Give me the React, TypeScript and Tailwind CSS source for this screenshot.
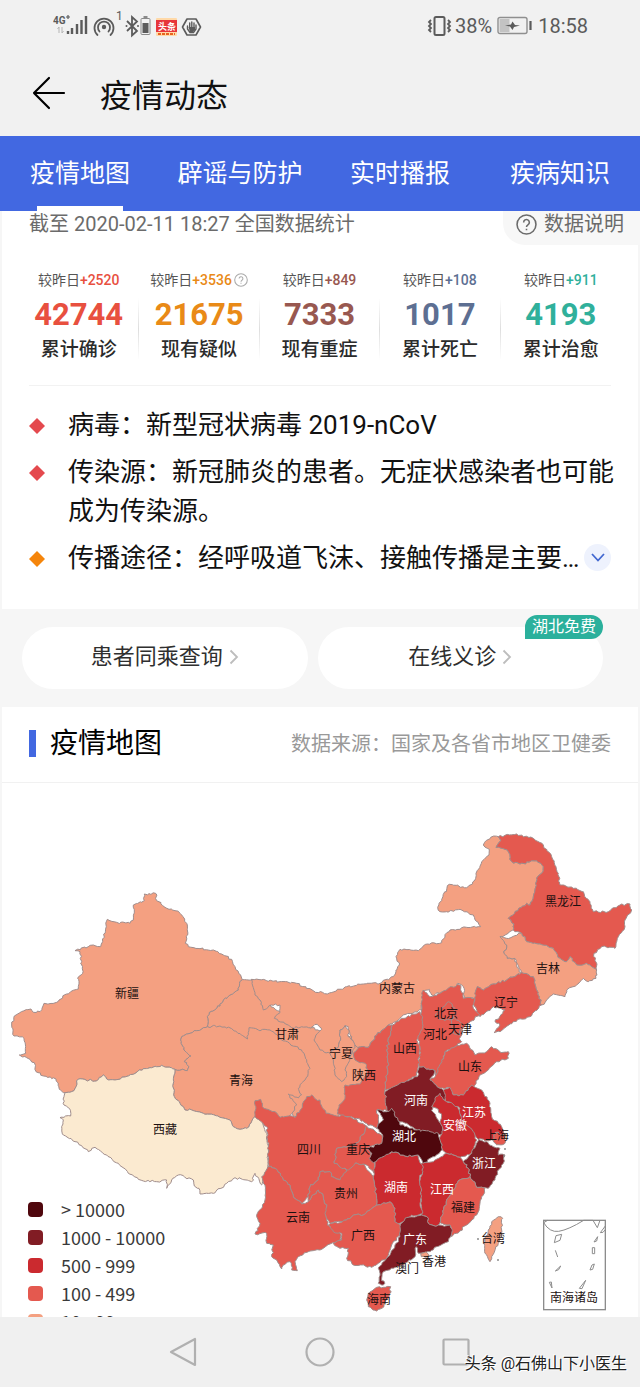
import { useState } from 'react';
import clsx from 'clsx';

const NONE = '#fbead0';
const LOW = '#f4a081';
const MID = '#e4594f';
const HIGH = '#cb2a2f';
const SEVERE = '#811c24';
const WORST = '#4f070d';

interface Region {
  id: string;
  fill: string;
  at: [number, number];
  points: string;
}

// outlines are stored at 3x, each one relative to its own map sheet
const WEST: [number, number] = [0, 291];
const NORTH: [number, number] = [690, 531];
const NORTHEAST: [number, number] = [1110, 111];
const SOUTHWEST: [number, number] = [720, 891];
const EAST: [number, number] = [1200, 591];
const SOUTHEAST: [number, number] = [1140, 951];

const regions: Region[] = [
  { id: 'gansu', fill: LOW, at: [0, 0], points: '727,590 755,589 780,651 900,720 1000,760 1060,760 1100,800 1120,880 1060,960 1010,1005 970,1010 880,1000 800,900 700,800 622,731 622,701 628,688 650,676 670,651 690,636 715,621 719,596' },
  { id: 'xinjiang', fill: LOW, at: WEST, points: '433,42 467,40 470,62 495,82 525,92 545,105 560,130 563,165 556,190 565,200 600,206 640,210 670,225 695,238 705,260 727,299 719,305 715,330 690,345 670,360 650,385 628,397 622,410 622,440 590,452 545,470 542,480 552,510 573,528 553,545 567,560 562,572 525,568 485,556 450,563 418,570 400,583 345,600 320,597 310,585 290,603 235,598 222,632 195,638 178,628 168,597 130,588 108,575 103,548 80,533 58,525 77,520 72,475 42,468 35,435 43,408 70,393 93,387 100,397 120,395 132,370 170,367 200,342 235,327 237,305 233,295 248,280 240,215 225,212 280,195 302,200 308,185 322,118 350,127 390,130 400,120 400,75 433,62' },
  { id: 'qinghai', fill: LOW, at: [0, 0], points: '622,731 660,729 695,737 743,768 747,734 775,741 810,741 840,766 905,801 930,856 915,891 895,916 905,935 895,945 865,933 870,945 890,966 870,998 850,1006 800,1010 765,1001 740,1036 720,1039 700,1031 690,1011 660,1003 610,991 575,981 555,981 540,961 523,941 520,891 525,859 562,863 567,851 553,836 573,819 552,801 542,771 545,761 590,743' },
  { id: 'tibet', fill: NONE, at: WEST, points: '195,638 222,632 235,598 290,603 310,585 320,597 345,600 400,583 418,570 450,563 485,556 525,568 520,600 523,650 540,670 555,690 575,690 610,700 660,712 690,720 700,740 720,748 740,745 765,710 785,720 800,760 805,810 803,860 785,915 765,880 755,905 705,893 680,910 640,940 600,942 597,925 583,918 580,900 535,885 515,900 500,925 500,900 470,905 430,903 412,893 385,880 355,850 320,825 285,802 265,815 245,797 225,785 190,765 185,740 190,720 180,713 212,708 208,685 192,675 192,650' },
  { id: 'inner-mongolia', fill: LOW, at: [0, 0], points: '755,589 800,593 840,596 890,601 940,623 982,633 1040,611 1090,603 1140,601 1180,581 1198,546 1188,521 1200,499 1255,503 1282,483 1325,479 1335,455 1350,441 1400,433 1442,431 1420,396 1380,379 1340,386 1320,386 1313,373 1348,304 1400,314 1425,291 1428,271 1445,236 1467,216 1468,199 1450,186 1472,163 1495,161 1502,173 1488,193 1522,201 1535,236 1560,243 1610,233 1630,251 1625,271 1610,286 1600,341 1590,366 1580,361 1525,406 1542,423 1540,441 1505,461 1520,486 1512,511 1522,526 1545,526 1557,566 1565,569 1520,591 1480,603 1450,621 1432,611 1430,646 1395,646 1390,611 1372,601 1358,621 1320,631 1295,636 1288,619 1270,626 1265,681 1210,696 1195,711 1165,726 1130,756 1105,793 1075,793 1065,786 1050,756 1045,731 1035,728 1020,741 1022,771 1015,793 990,811 960,801 942,771 948,756 965,739 952,724 925,734 875,734 823,706 840,689 840,666 815,666 790,681 780,651 765,636' },
  { id: 'ningxia', fill: LOW, at: NORTH, points: '345,197 357,210 355,230 365,240 375,262 360,295 345,330 350,350 335,365 315,345 310,300 300,280 325,262 332,240 330,210' },
  { id: 'heilongjiang', fill: MID, at: NORTHEAST, points: '385,50 440,42 490,55 520,75 545,110 565,160 570,195 610,205 640,215 660,250 670,275 715,275 750,255 780,252 785,270 765,300 765,320 745,350 735,385 695,380 672,400 680,450 650,430 620,435 600,410 590,425 570,415 550,385 510,372 470,365 455,340 430,330 432,312 415,295 470,250 480,255 490,230 500,175 515,160 520,140 500,122 450,132 425,125 412,90 378,82 392,62' },
  { id: 'jilin', fill: LOW, at: NORTHEAST, points: '390,350 410,355 455,340 470,365 510,372 550,385 570,415 590,425 600,410 620,435 650,430 680,450 678,475 655,485 640,475 620,495 590,510 585,530 550,522 515,555 500,510 490,470 455,458 435,415 412,415 402,400 410,375' },
  { id: 'liaoning', fill: MID, at: NORTHEAST, points: '455,458 490,470 500,510 515,555 480,590 430,605 390,635 372,638 390,615 375,605 405,570 370,560 330,590 310,550 322,500 340,510 370,492 410,480' },
  { id: 'shaanxi', fill: MID, at: NORTH, points: '475,195 440,225 415,262 385,262 370,285 375,300 410,315 410,345 390,372 345,375 345,415 327,435 322,462 345,470 380,475 410,490 440,505 445,480 440,450 480,450 465,390 475,310 470,270 487,195' },
  { id: 'hebei', fill: MID, at: EAST, points: '65,40 70,30 90,50 120,40 155,20 180,15 190,55 225,55 220,85 240,105 205,130 185,150 180,180 185,185 160,205 135,215 110,290 105,272 58,260 60,200 50,150 65,90' },
  { id: 'beijing', fill: MID, at: EAST, points: '120,90 145,65 165,85 160,110 150,120 120,118 105,105' },
  { id: 'tianjin', fill: MID, at: EAST, points: '160,110 185,130 180,165 160,160 155,130' },
  { id: 'shanxi', fill: MID, at: NORTH, points: '487,195 520,175 570,155 578,170 575,210 560,240 570,270 565,320 560,345 520,372 465,390 475,310 470,270' },
  { id: 'shandong', fill: MID, at: EAST, points: '105,290 135,215 165,200 200,190 225,225 260,215 275,200 300,215 325,215 325,235 290,245 265,270 240,285 225,315 190,345 160,345 145,322 120,325 90,300' },
  { id: 'sichuan', fill: MID, at: SOUTHWEST, points: '45,62 62,58 72,85 105,95 120,112 145,108 165,112 185,85 195,60 200,50 215,45 228,58 240,60 245,78 258,100 290,108 310,105 330,110 380,138 375,155 345,195 290,205 283,250 305,262 320,270 310,285 300,300 275,290 270,275 240,275 235,300 210,320 205,350 185,372 160,350 150,315 130,300 110,268 85,260 85,200 80,140 45,110' },
  { id: 'yunnan', fill: MID, at: SOUTHWEST, points: '85,260 110,268 130,300 150,315 160,350 185,372 205,365 235,330 250,350 260,380 262,435 300,460 305,480 270,492 240,510 205,515 175,530 165,545 172,572 155,570 150,545 130,555 125,567 110,540 95,530 100,495 80,490 80,460 45,462 60,430 50,410 75,360 75,315 65,290' },
  { id: 'guizhou', fill: MID, at: SOUTHWEST, points: '205,365 205,350 210,320 235,300 240,275 270,275 275,290 300,300 320,270 345,250 370,252 400,290 405,320 410,375 370,405 340,405 320,420 270,430 255,400 260,380 250,350 235,330' },
  { id: 'guangxi', fill: MID, at: SOUTHWEST, points: '265,435 320,420 340,405 370,405 410,375 450,365 465,385 465,425 485,435 480,465 455,495 440,535 415,550 395,562 365,555 340,555 320,535 325,505 300,505 280,490 305,480 305,460 280,455' },
  { id: 'chongqing', fill: MID, at: SOUTHWEST, points: '380,138 425,165 428,190 390,200 400,245 410,280 395,270 370,252 345,250 325,270 300,260 283,250 290,205 345,195 375,155' },
  { id: 'henan', fill: SEVERE, at: EAST, points: '-45,335 0,310 52,290 58,260 105,272 90,300 120,325 145,345 130,365 108,362 95,392 125,430 130,460 100,470 60,455 20,430 -30,415 -40,380' },
  { id: 'anhui', fill: HIGH, at: SOUTHEAST, points: '165,-5 180,-20 200,5 230,10 245,50 280,90 290,120 275,160 240,172 200,160 187,150 180,110 190,90 180,65 185,45 170,25 155,20' },
  { id: 'jiangsu', fill: HIGH, at: SOUTHEAST, points: '190,-30 210,-38 220,-15 250,-15 275,-45 305,-30 330,10 335,50 365,80 370,105 355,120 320,122 295,118 280,95 245,60 235,20 200,5' },
  { id: 'shanghai', fill: MID, at: SOUTHEAST, points: '345,98 378,105 375,130 350,135 340,120' },
  { id: 'zhejiang', fill: SEVERE, at: SOUTHEAST, points: '250,185 275,160 295,118 320,125 340,140 360,145 355,165 375,165 370,190 355,210 345,240 325,265 290,262 270,230 265,205' },
  { id: 'jiangxi', fill: HIGH, at: SOUTHEAST, points: '125,190 160,185 200,160 240,172 250,185 265,205 270,230 235,242 220,270 200,300 180,368 170,378 145,370 145,355 125,345 125,300 118,260 125,215' },
  { id: 'fujian', fill: MID, at: SOUTHEAST, points: '270,230 290,262 315,262 300,310 290,345 260,375 230,400 215,410 210,375 180,368 200,300 220,270 235,242' },
  { id: 'hunan', fill: HIGH, at: SOUTHWEST, points: '405,245 430,225 455,215 495,228 535,225 540,248 550,262 538,300 545,330 540,370 548,400 510,410 480,430 465,425 465,385 450,365 410,375 405,320 400,290' },
  { id: 'hubei', fill: WORST, at: SOUTHWEST, points: '412,88 440,95 455,85 480,135 530,150 570,155 595,160 600,180 607,210 570,235 550,250 535,225 495,228 455,215 400,248 388,235 395,220 380,205 425,190 428,165 410,145 415,130 430,120' },
  { id: 'guangdong', fill: SEVERE, at: SOUTHEAST, points: '75,355 125,345 145,355 145,370 170,378 210,375 215,400 205,425 170,440 150,455 130,458 115,460 108,440 105,470 75,490 50,500 10,515 5,535 15,550 5,555 -5,550 0,520 -5,505 20,475 45,435 60,410 60,380' },
  { id: 'hongkong', fill: LOW, at: SOUTHEAST, points: '122,460 140,457 146,464 136,472 124,470' },
  { id: 'hainan', fill: MID, at: SOUTHWEST, points: '385,640 410,622 452,620 450,640 435,665 432,680 410,693 385,680 380,660' },
  { id: 'taiwan', fill: LOW, at: SOUTHEAST, points: '335,365 355,350 368,355 365,390 355,430 335,470 330,485 315,460 312,430 325,390' },
];

const labels: { name: string; x: number; y: number; light?: boolean }[] = [
  { name: '新疆', x: 127, y: 215 },
  { name: '西藏', x: 165, y: 351 },
  { name: '青海', x: 241, y: 302 },
  { name: '甘肃', x: 287, y: 256 },
  { name: '宁夏', x: 341, y: 275 },
  { name: '内蒙古', x: 397, y: 210 },
  { name: '陕西', x: 364, y: 297 },
  { name: '山西', x: 405, y: 270 },
  { name: '北京', x: 446, y: 235 },
  { name: '河北', x: 435, y: 256 },
  { name: '天津', x: 460, y: 251 },
  { name: '辽宁', x: 506, y: 224 },
  { name: '吉林', x: 548, y: 190 },
  { name: '黑龙江', x: 563, y: 123 },
  { name: '山东', x: 470, y: 288 },
  { name: '河南', x: 416, y: 322, light: true },
  { name: '江苏', x: 474, y: 334, light: true },
  { name: '安徽', x: 455, y: 347, light: true },
  { name: '上海', x: 497, y: 357 },
  { name: '湖北', x: 404, y: 358, light: true },
  { name: '重庆', x: 358, y: 371 },
  { name: '四川', x: 309, y: 371 },
  { name: '浙江', x: 484, y: 385, light: true },
  { name: '湖南', x: 396, y: 409, light: true },
  { name: '江西', x: 442, y: 411, light: true },
  { name: '贵州', x: 346, y: 415 },
  { name: '福建', x: 463, y: 429 },
  { name: '云南', x: 298, y: 439 },
  { name: '广西', x: 363, y: 457 },
  { name: '广东', x: 415, y: 461, light: true },
  { name: '台湾', x: 493, y: 460 },
  { name: '香港', x: 434, y: 483 },
  { name: '澳门', x: 407, y: 490 },
  { name: '海南', x: 379, y: 521 },
  { name: '南海诸岛', x: 574, y: 519 },
];

const legend = [
  { label: '> 10000', swatch: 'bg-[#4f070d]' },
  { label: '1000 - 10000', swatch: 'bg-[#811c24]' },
  { label: '500 - 999', swatch: 'bg-[#cb2a2f]' },
  { label: '100 - 499', swatch: 'bg-[#e4594f]' },
  { label: '10 - 99', swatch: 'bg-[#f4a081]' },
];

const stats = [
  { delta: '+2520', total: '42744', label: '累计确诊', color: 'text-[#e8503f]' },
  { delta: '+3536', total: '21675', label: '现有疑似', color: 'text-[#e98a17]', help: true },
  { delta: '+849', total: '7333', label: '现有重症', color: 'text-[#985850]' },
  { delta: '+108', total: '1017', label: '累计死亡', color: 'text-[#5d6f92]' },
  { delta: '+911', total: '4193', label: '累计治愈', color: 'text-[#30b09b]' },
];

const tabs = ['疫情地图', '辟谣与防护', '实时播报', '疾病知识'];

function noise(x: number, y: number) {
  const v = Math.sin(x * 12.9898 + y * 78.233) * 43758.5453;
  return v - Math.floor(v) - 0.5;
}

// Breaks long straight edges into small bends. The bend depends only on the
// position, so neighbouring provinces keep a common border.
function roughen({ at, points }: Region) {
  const pts = points.split(' ').map((p) => {
    const [x, y] = p.split(',').map(Number);
    return [x + at[0], y + at[1]];
  });
  const out: string[] = [];
  pts.forEach(([x, y], i) => {
    const [nx, ny] = pts[(i + 1) % pts.length];
    const steps = Math.max(1, Math.round(Math.hypot(nx - x, ny - y) / 7));
    out.push(`${x},${y}`);
    for (let s = 1; s < steps; s++) {
      const px = Math.round(x + ((nx - x) * s) / steps);
      const py = Math.round(y + ((ny - y) * s) / steps);
      const dx = noise(px, py) * 6;
      const dy = noise(py, px + 7) * 6;
      out.push(`${(px + dx).toFixed(1)},${(py + dy).toFixed(1)}`);
    }
  });
  return out.join(' ');
}

function StatusBar() {
  return (
    <div className="flex h-[52px] items-center justify-between pr-[52px] pl-[53px] text-[#5b5b5b]">
      <svg width="150" height="34" viewBox="0 0 150 34" fill="none" aria-label="信号">
        <text x="0" y="15" fontSize="10" fontWeight="700" fill="currentColor">4G</text>
        <path d="M13 8h4M15 6v4" stroke="currentColor" strokeWidth="1.2" />
        <path d="M6 18v6M4.500 20l1.500-2M9 18v6m0 0l1.500-2" stroke="#b5b5b5" strokeWidth="1" />
        <path d="M15 22v3M19 19v6M24 15v10M28.500 11v14M33 7v18" stroke="currentColor" strokeWidth="2.400" />
        <circle cx="51" cy="18" r="2.200" fill="currentColor" />
        <path d="M46.500 22.500a6 6 0 1 1 9 0M44.500 26a9.500 9.500 0 1 1 13 0" stroke="currentColor" strokeWidth="1.800" strokeLinecap="round" />
        <text x="63" y="11" fontSize="12" fill="currentColor">1</text>
        <path d="M74 12l10 10-5 4.500V8l5 4.500-10 9.500" stroke="currentColor" strokeWidth="1.800" />
        <circle cx="73.500" cy="17" r="1" fill="currentColor" />
        <circle cx="85" cy="17" r="1" fill="currentColor" />
        <rect x="88" y="9.500" width="9" height="16" rx="1" stroke="#8a8a8a" />
        <path d="M90.500 8h4" stroke="#8a8a8a" strokeWidth="2" />
        <rect x="89.500" y="14" width="6" height="10" fill="currentColor" />
        <rect x="103" y="9" width="21" height="18" rx="1" fill="#ffd9a8" />
        <rect x="103" y="11" width="21" height="12" fill="#e7353b" />
        <path d="M105 25h17" stroke="#e8631f" strokeWidth="2" strokeDasharray="3 1" />
        <text x="105" y="21" fontSize="9" fontWeight="700" fill="#fff">头条</text>
        <path d="M134 10h9l4.500 8-4.500 8h-9l-4.500-8z" stroke="currentColor" strokeWidth="1.600" strokeLinejoin="round" />
        <path d="M134.500 17v3l2.500 3.500h3.500l2.500-3.500v-4M136.700 14v5M138.800 13v6M141 14v5" stroke="currentColor" strokeWidth="1.400" strokeLinecap="round" />
        <path d="M135.500 18h6.500v2.500l-2 2.500h-3z" fill="currentColor" />
      </svg>
      <div className="flex items-center text-[20px] leading-6">
        <svg width="26" height="22" viewBox="0 0 26 22" fill="none" stroke="currentColor" aria-hidden="true">
          <rect x="7.500" y="2" width="10" height="18" rx="1.500" strokeWidth="2" />
          <path d="M4 5l-2 2 2 2-2 2 2 2-2 2 2 2M21 5l2 2-2 2 2 2-2 2 2 2-2 2" strokeWidth="1.800" />
        </svg>
        <span className="ml-[2px]">38%</span>
        <svg className="ml-[5px]" width="36" height="20" viewBox="0 0 36 20" fill="none" aria-hidden="true">
          <rect x="1" y="1.500" width="29" height="16" rx="2" stroke="#8f8f8f" strokeWidth="1.400" />
          <rect x="2.500" y="3" width="10" height="13" fill="#c3c3c3" />
          <path d="M33.500 5v9" stroke="currentColor" strokeWidth="2.200" />
          <path d="M8 9.500l6-1 1.500-3 2.500 3.500 5 .5-6 1.500-1.500 3-2.500-3.500z" fill="currentColor" />
        </svg>
        <span className="ml-[5px]">18:58</span>
      </div>
    </div>
  );
}

function Header() {
  return (
    <header className="bg-[#f1f1f1]">
      <StatusBar />
      <div className="flex h-[84px] items-center gap-[33px] pl-[32px]">
        <button type="button" aria-label="返回" className="text-black">
          <svg width="35" height="36" viewBox="0 0 35 36" fill="none" stroke="currentColor" strokeWidth="2.200" strokeLinecap="round" strokeLinejoin="round">
            <path d="M17 2L2 17l15 15M2 17h30" />
          </svg>
        </button>
        <h1 className="pt-[4px] text-[32px] leading-[40px] text-[#111]">疫情动态</h1>
      </div>
    </header>
  );
}

function Tabs() {
  const [active, setActive] = useState(tabs[0]);

  return (
    <nav className="grid h-[75px] grid-cols-4 bg-[#4268e1] text-white">
      {tabs.map((tab) => (
        <button
          key={tab}
          type="button"
          onClick={() => setActive(tab)}
          className="flex flex-col items-center justify-between pt-[20px] text-[25px] leading-[36px] whitespace-nowrap"
        >
          {tab}
          <span className={clsx('h-[5px] w-[86px]', tab === active && 'bg-white')} />
        </button>
      ))}
    </nav>
  );
}

function HelpMark({ className }: { className?: string }) {
  return (
    <svg className={className} viewBox="0 0 20 20" fill="none" stroke="currentColor" strokeWidth="1.500" aria-hidden="true">
      <circle cx="10" cy="10" r="9" />
      <path d="M7.300 8a2.700 2.700 0 1 1 4.200 2.200c-1 .7-1.500 1-1.500 2.200M10 14v1.500" />
    </svg>
  );
}

function Summary() {
  return (
    <section className="mx-[2px] bg-white pb-[31px]">
      <div className="flex h-[34px] justify-between">
        <p className="pl-[27px] text-[20px] leading-[26px] text-[#6b6b6b]">截至 2020-02-11 18:27 全国数据统计</p>
        <button type="button" className="-mr-[2px] flex items-start gap-[7px] rounded-bl-[22px] bg-[#f7f7f7] pr-[16px] pl-[13px] text-[20px] leading-[26px] text-[#6b6b6b]">
          <HelpMark className="mt-[3px] size-[21px]" />
          数据说明
        </button>
      </div>

      <div className="mx-[17px] mt-[25px] grid grid-cols-5">
        {stats.map((s, i) => (
          <div key={s.label} className="flex">
            <div className="flex flex-1 flex-col items-center whitespace-nowrap">
              <p className="flex items-center text-[14px] leading-[20px] text-[#555]">
                较昨日<span className={clsx('font-medium', s.color)}>{s.delta}</span>
                {s.help && <HelpMark className="ml-[2px] size-[14px] text-[#aaa]" />}
              </p>
              <p className={clsx('mt-[5px] text-[31px] leading-[40px] font-bold', s.color)}>{s.total}</p>
              <p className="mt-[1px] text-[19px] leading-[28px] font-medium text-[#2b2b2b]">{s.label}</p>
            </div>
            {i < stats.length - 1 && (
              <span className="mt-[28px] h-[62px] w-px bg-linear-to-b from-white via-[#dedede] to-white" />
            )}
          </div>
        ))}
      </div>

      <ul className="mx-[27px] mt-[21px] flex flex-col gap-[8px] border-t border-[#f2f2f2] pt-[20px] text-[26px] leading-[39px] text-[#111]">
        <li className="flex gap-[23px]">
          <Diamond className="text-[#e4494e]" />
          病毒：新型冠状病毒 2019-nCoV
        </li>
        <li className="-mr-[8px] flex gap-[23px]">
          <Diamond className="text-[#e4494e]" />
          <span className="flex-1">传染源：新冠肺炎的患者。无症状感染者也可能成为传染源。</span>
        </li>
        <li className="flex items-start gap-[23px]">
          <Diamond className="text-[#f5850b]" />
          <span className="-mr-[20px] flex-1 whitespace-nowrap">传播途径：经呼吸道飞沫、接触传播是主要…</span>
          <button type="button" aria-label="展开" className="mt-[5px] flex size-[27px] shrink-0 items-center justify-center rounded-full bg-[#eef2fd]">
            <svg width="14" height="9" viewBox="0 0 14 9" fill="none" stroke="#4268d0" strokeWidth="1.800">
              <path d="M1 1l6 6.500L13 1" />
            </svg>
          </button>
        </li>
      </ul>
    </section>
  );
}

function Diamond({ className }: { className: string }) {
  return (
    <svg className={clsx('mt-[12px] shrink-0', className)} width="16" height="16" viewBox="0 0 16 16" fill="currentColor" aria-hidden="true">
      <path d="M8 0l8 8-8 8-8-8z" />
    </svg>
  );
}

function ServiceLink({ label, badge }: { label: string; badge?: string }) {
  return (
    <a href="#service" className="relative flex h-[62px] flex-1 items-center justify-center gap-[6px] rounded-full bg-white pb-[2px] text-[22px] leading-[32px] text-[#2f2f2f]">
      {label}
      <svg width="10" height="16" viewBox="0 0 10 16" fill="none" stroke="#bdbdbd" strokeWidth="1.800" aria-hidden="true">
        <path d="M1.500 1.500L8 8l-6.500 6.500" />
      </svg>
      {badge && (
        <span className="absolute -top-[12px] right-0 rounded-[12px] rounded-bl-none bg-[#2bb09c] px-[7px] text-[16px] leading-[24px] text-white">
          {badge}
        </span>
      )}
    </a>
  );
}

function EpidemicMap() {
  return (
    <div className="relative overflow-hidden">
      <svg className="block w-full" viewBox="2 0 636 534" role="img" aria-label="疫情地图">
        <g transform="scale(0.33333)" stroke="#a08d8c" strokeWidth="3" strokeLinejoin="round">
          {regions.map((r) => (
            <polygon key={r.id} fill={r.fill} points={roughen(r)} />
          ))}
        </g>
        <g transform="translate(500 407) scale(0.33333)" fill="none" stroke="#8c8c8c" strokeWidth="3">
          <rect x="131" y="91" width="185" height="268" strokeWidth="4" />
          <path d="M131 98l12-7M131 98q18 30 45 26q30-5 75-33h28l13 22 8-22M316 108l-15 20 8-1 7-8" />
          <path d="M168 137l17-4-5 18-17 7zM166 181l7 20M182 228l-16 15 10-4zM148 277l8 17-2-18zM293 140l-11 16 8-3zM277 173h7v18h-7zM283 222l-7 3-6 15 8-2zM257 271l-19 24 8 1z" />
        </g>
        <g fill="#8c8c8c">
          <circle cx="478" cy="456" r="1" />
          <circle cx="498" cy="477" r="1" />
          <circle cx="505" cy="366" r="1" />
          <circle cx="504" cy="373" r="1" />
        </g>
        <g fontSize="12" textAnchor="middle">
          {labels.map((l) => (
            <text key={l.name} x={l.x} y={l.y} fill={l.light ? '#fff' : '#1c1010'}>
              {l.name}
            </text>
          ))}
        </g>
      </svg>
      <ul className="absolute bottom-0 left-[26px] flex h-[122px] flex-col overflow-hidden font-['Noto_Sans_CJK_SC',sans-serif] text-[18px] text-[#3a3a3a]">
        {legend.map((item) => (
          <li key={item.label} className="flex h-[28px] shrink-0 items-center gap-[18px] leading-[28px]">
            <span className={clsx('size-[15px] rounded-[4px]', item.swatch)} />
            {item.label}
          </li>
        ))}
      </ul>
    </div>
  );
}

function SystemNav() {
  return (
    <footer className="relative flex h-[70px] items-center justify-center gap-[106px] bg-[#f0f0f0] text-[#b0b0b0]">
      <button type="button" aria-label="后退">
        <svg width="30" height="32" viewBox="0 0 30 32" fill="none" stroke="currentColor" strokeWidth="2.200" strokeLinejoin="round">
          <path d="M26 3v26L2 16z" />
        </svg>
      </button>
      <button type="button" aria-label="主页">
        <svg width="30" height="30" viewBox="0 0 30 30" fill="none" stroke="currentColor" strokeWidth="2.200">
          <circle cx="15" cy="15" r="13.500" />
        </svg>
      </button>
      <button type="button" aria-label="最近任务">
        <svg width="30" height="30" viewBox="0 0 30 30" fill="none" stroke="currentColor" strokeWidth="2.200">
          <rect x="2.500" y="2.500" width="25" height="25" rx="1" />
        </svg>
      </button>
      <p className="absolute right-[13px] bottom-[11px] text-[16px] leading-[24px] text-[#222] [text-shadow:1px_1px_0_#fff,-1px_-1px_0_#fff]">
        头条 @石佛山下小医生
      </p>
    </footer>
  );
}

export default function App() {
  return (
    <div className="bg-[#f6f6f6] font-['Roboto','Noto_Sans_CJK_SC',sans-serif]">
      <Header />
      <Tabs />
      <main>
        <Summary />
        <div className="flex gap-[10px] pt-[18px] pr-[37px] pb-[18px] pl-[22px]">
          <ServiceLink label="患者同乘查询" />
          <ServiceLink label="在线义诊" badge="湖北免费" />
        </div>
        <section className="mx-[2px] bg-white">
          <div className="flex h-[76px] items-center justify-between border-b border-[#f1f1f1] px-[27px] pb-[2px]">
            <h2 className="flex items-center gap-[14px] text-[28px] leading-[40px] text-black">
              <span className="h-[27px] w-[7px] bg-[#4268e1]" />
              疫情地图
            </h2>
            <p className="text-[20px] leading-[30px] text-[#999]">数据来源：国家及各省市地区卫健委</p>
          </div>
          <EpidemicMap />
        </section>
      </main>
      <SystemNav />
    </div>
  );
}
